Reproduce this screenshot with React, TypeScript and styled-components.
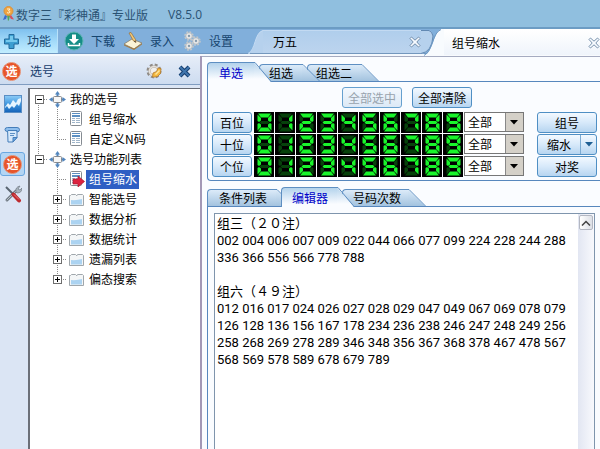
import React, { useState } from 'react';
import styled, { createGlobalStyle, css } from 'styled-components';

const UI_FONT = "'Noto Sans CJK SC', 'Noto Sans', sans-serif";

const GlobalStyle = createGlobalStyle`
  *, *::before, *::after { box-sizing: border-box; }
  body { margin: 0; background: #fafcff; overflow: hidden; }
  button, select, textarea { font: inherit; color: inherit; margin: 0; }
  svg { display: block; flex: none; }
`;

const Window = styled.div`
  display: flex;
  flex-direction: column;
  height: 100vh;
  overflow: hidden;
  font: 12px/16px ${UI_FONT};
  color: #000;
`;

const TitleBar = styled.header`
  display: flex;
  align-items: center;
  flex: none;
  height: 27px;
  padding: 2px 0 0 2px;
  background: #90bfdf;
  color: #2a5273;
`;

const Title = styled.h1`
  margin: 0 20px 0 1px;
  font: inherit;
  white-space: nowrap;
`;

const Version = styled.span`
  font-family: 'Open Sans', sans-serif;
`;

const Toolbar = styled.nav`
  display: flex;
  flex: none;
  height: 29px;
  border-top: 2px solid #6c9cc4;
  background: linear-gradient(#81afdb 0 24px, #6f98c2 24px 25px, #f4f8fd 25px);
`;

const ToolButton = styled.button<{ $active?: boolean }>`
  display: flex;
  align-items: center;
  gap: 7px;
  height: 24px;
  padding: 0 4px;
  border: 0;
  background: none;
  color: #16456f;
  white-space: nowrap;
  ${p => p.$active && css`
    padding: 0 6px 0 3px;
    margin-right: 2px;
    background: linear-gradient(#7fc0ee, #a5dcfa 55%, #c2edff);
    border-right: 1px solid #b9e2fa;
  `}
`;

const DocTabs = styled.div`
  display: flex;
  flex: 1;
  min-width: 0;
  margin-left: 11px;
`;

const DocTab = styled.div<{ $active?: boolean }>`
  display: flex;
  flex: none;
  height: ${p => (p.$active ? 27 : 25)}px;
  padding-top: ${p => (p.$active ? 0 : 1)}px;
  margin-left: ${p => (p.$active ? -10 : 0)}px;
`;

const DocTabBody = styled.div<{ $active?: boolean }>`
  display: flex;
  align-items: center;
  justify-content: space-between;
  width: ${p => (p.$active ? 156 : 158)}px;
  padding-left: ${p => (p.$active ? 8 : 10)}px;
  border-top: 1px solid ${p => (p.$active ? '#ffffff' : '#c3daf2')};
  border-bottom: 1px solid ${p => (p.$active ? '#f8fafd' : '#7397bd')};
  background: ${p => (p.$active ? 'linear-gradient(#ffffff, #eff4fb)' : 'linear-gradient(#b0ceec, #bcd4ee)')};
`;

const PlainButton = styled.button`
  display: flex;
  align-items: center;
  padding: 0;
  border: 0;
  background: none;
`;

const Main = styled.div`
  display: flex;
  flex: 1;
  min-height: 0;
`;

const Side = styled.aside`
  display: flex;
  flex-direction: column;
  flex: none;
  width: 200px;
  background: #dbe5f4;
`;

const SideHeader = styled.div`
  display: flex;
  align-items: center;
  flex: none;
  height: 29px;
  padding: 2px 9px 0 2px;
  border-bottom: 1px solid #7f9cc0;
  background: linear-gradient(#e6edf8, #cddcf0);
  color: #153c6c;
`;

const SideTitle = styled.h2`
  flex: 1;
  margin: 0 0 0 9px;
  font: inherit;
`;

const HeaderTools = styled.div`
  display: flex;
  align-items: center;
  gap: 15px;
`;

const SideBody = styled.div`
  display: flex;
  flex: 1;
  min-height: 0;
  padding-top: 3px;
`;

const Rail = styled.div`
  display: flex;
  flex-direction: column;
  align-items: center;
  flex: none;
  gap: 6px;
  width: 28px;
  padding: 4px 3px 0 0;
`;

const RailButton = styled.button<{ $active?: boolean }>`
  display: grid;
  place-items: center;
  width: 25px;
  height: 24px;
  padding: 0;
  border: 1px solid ${p => (p.$active ? '#6aa7e0' : 'transparent')};
  border-radius: 3px;
  background: ${p => (p.$active ? '#b3d5f4' : 'none')};
`;

const Tree = styled.ul`
  flex: 1;
  margin: 0;
  padding: 0;
  list-style: none;
  background: #fff;
  border-top: 1px solid #676b74;
  border-left: 2px solid #6b6f78;
`;

const TreeRow = styled.li`
  display: flex;
  align-items: center;
  height: 20px;
`;

const dotsDown = 'repeating-linear-gradient(#8a8a8a 0 1px, transparent 1px 2px)';
const dotsAcross = 'repeating-linear-gradient(90deg, #8a8a8a 0 1px, transparent 1px 2px)';

type Link = 'none' | 'line' | 'first' | 'mid' | 'last';

const Branch = styled.span<{ $link: Link }>`
  display: grid;
  place-items: center;
  flex: none;
  width: 18px;
  height: 20px;
  ${p => p.$link !== 'none' && css`
    background-image: ${dotsDown}, ${dotsAcross};
    background-repeat: no-repeat;
    background-size: 1px ${p.$link === 'first' || p.$link === 'last' ? 10 : 20}px, ${p.$link === 'line' ? 0 : 10}px 1px;
    background-position: 8px ${p.$link === 'first' ? 10 : 0}px, 8px 10px;
  `}
  & + & { width: 19px; background-position-x: 9px; }
`;

const Expander = styled.button`
  display: grid;
  place-items: center;
  width: 9px;
  height: 9px;
  padding: 0;
  border: 1px solid #6e6e6e;
  background: #fff;
`;

const NodeIcon = styled.span`
  display: grid;
  place-items: center;
  width: 19px;
  height: 18px;
`;

const NodeLabel = styled.span<{ $selected?: boolean }>`
  height: 19px;
  padding: 1px 2px 0 3px;
  white-space: nowrap;
  ${p => p.$selected && css`background: #2f5fc4; color: #fff;`}
`;

const Splitter = styled.div`
  flex: none;
  width: 2px;
  background: #a398b6;
`;

const Work = styled.main`
  display: flex;
  flex-direction: column;
  flex: 1;
  min-width: 0;
  padding: 5px 0 0 5px;
  border-top: 1px solid #a5abc0;
  background: #fafcff;
`;

const TabStrip = styled.div`
  display: flex;
  align-items: flex-end;
  flex: none;
  height: 19px;
`;

const Tab = styled.button<{ $active?: boolean; $level: number }>`
  display: flex;
  position: relative;
  z-index: ${p => p.$level};
  height: ${p => (p.$active ? 20 : 17)}px;
  margin-bottom: ${p => (p.$active ? -1 : 0)}px;
  padding: 0;
  border: 0;
  background: none;
  color: ${p => (p.$active ? '#0000c8' : '#000')};
  white-space: nowrap;
  & + & { margin-left: -13px; }
`;

const TabBody = styled.span<{ $active?: boolean; $pad: number; $width: number }>`
  display: flex;
  align-items: center;
  width: ${p => p.$width}px;
  padding: 0 0 0 ${p => p.$pad}px;
  border: solid #5e8fc2;
  border-width: 1px 0 0 1px;
  border-radius: 4px 0 0 0;
  background: ${p => (p.$active ? 'linear-gradient(#b4d3ec, #fafcff 85%)' : 'linear-gradient(#dcebf9, #a3c3df)')};
`;

const UpperPane = styled.section`
  display: flex;
  flex-direction: column;
  flex: none;
  height: 100px;
  padding: 5px 3px 0 4px;
  margin-bottom: 6px;
  border: solid #5787bd;
  border-width: 1px 0 1px 1px;
  border-radius: 0 0 0 4px;
`;

const AllButtons = styled.div`
  display: flex;
  gap: 10px;
  margin: 0 0 4px 130px;
`;

const Button = styled.button<{ $width: number }>`
  display: flex;
  align-items: center;
  justify-content: center;
  flex: none;
  width: ${p => p.$width}px;
  height: 21px;
  padding: 0;
  border: 1px solid #4f8fc4;
  border-radius: 3px;
  background: linear-gradient(#f3f9ff, #d7e9fa 50%, #b7d5f0);
  white-space: nowrap;
  &:disabled { color: #98a3ad; border-color: #66a0cf; background: linear-gradient(#f3f8fe, #dce9f6); }
`;

const SplitButton = styled.div`
  display: flex;
  width: 60px;
  height: 21px;
  border: 1px solid #4f8fc4;
  border-radius: 3px;
  background: linear-gradient(#f3f9ff, #d7e9fa 50%, #b7d5f0);
`;

const SplitPart = styled.button<{ $arrow?: boolean }>`
  display: grid;
  place-items: center;
  flex: ${p => (p.$arrow ? '0 0 16px' : '1')};
  padding: 0;
  border: 0;
  border-left: ${p => (p.$arrow ? '1px solid #7dabd2' : '0')};
  background: none;
`;

const PickRows = styled.div`
  display: flex;
  flex-direction: column;
  gap: 1px;
`;

const PickRow = styled.div`
  display: flex;
  justify-content: space-between;
`;

const PickGroup = styled.div`
  display: flex;
  flex: none;
`;

const Digits = styled.div`
  display: flex;
  gap: 1px;
  margin: 0 1px 0 2px;
`;

const DigitButton = styled.button`
  width: 20px;
  height: 21px;
  padding: 0;
  border: 0;
  background: #000;
`;

const SelectBox = styled.div`
  display: grid;
  width: 60px;
  height: 20px;
  border: 1px solid #777;
  background: linear-gradient(90deg, #fff 40px, #888 40px 41px, #d4d0c8 41px);
`;

const Select = styled.select`
  grid-area: 1 / 1;
  appearance: none;
  width: 100%;
  padding: 0 20px 0 3px;
  border: 0;
  background: none;
  line-height: 18px;
`;

const SelectArrow = styled.span`
  grid-area: 1 / 1;
  place-self: center end;
  margin-right: 5px;
  pointer-events: none;
`;

const LowerPane = styled.section`
  display: flex;
  flex: 1;
  min-height: 0;
  padding: 6px 5px 0 6px;
  border: solid #5787bd;
  border-width: 1px 0 0 1px;
`;

const EditorFrame = styled.div`
  display: flex;
  flex: 1;
  border: solid #7f95ad;
  border-width: 1px 1px 0;
  background: #fff;
`;

const Editor = styled.textarea`
  flex: 1;
  min-width: 0;
  padding: 1px 0 0 2px;
  border: 0;
  outline: 0;
  resize: none;
  overflow: hidden;
  background: none;
  white-space: pre;
  font: 13px/17px 'Roboto', 'Noto Sans CJK SC', sans-serif;
`;

const ScrollBar = styled.div`
  flex: none;
  width: 16px;
  padding: 1px;
  background: linear-gradient(90deg, #e2e6f2, #f8f9fd);
`;

const ScrollButton = styled.button`
  display: grid;
  place-items: center;
  width: 14px;
  height: 15px;
  padding: 0;
  border: 1px solid #b3b7c2;
  border-radius: 2px;
  background: linear-gradient(90deg, #fff, #dcdfe6);
`;

const MedalIcon = () => (
  <svg width="13" height="17" viewBox="0 0 13 17">
    <path d="M3 9 1 14l3-1 1-3z" fill="#3b69cc" />
    <path d="M9 9l3 4.500-3-.5L7 10z" fill="#d45060" />
    <path d="M5 9h3l-1 5-1 1z" fill="#53a65b" />
    <circle cx="6.500" cy="5" r="4.500" fill="#f0a440" stroke="#d8903d" />
    <path d="M5 3h3L6.500 4.800q2 .2 1.300 1.600Q6.800 7.500 5 6.700" fill="none" stroke="#fff2d4" />
  </svg>
);

const PlusIcon = () => (
  <svg width="17" height="17" viewBox="0 0 17 17">
    <path d="M6 1.500h5V6h4.500v5H11v4.500H6V11H1.500V6H6z" fill="#3c9ed1" stroke="#236b9d" />
    <path d="M7 3h3v4h4v2H3V7h4z" fill="#75c9ed" />
  </svg>
);

const DownloadIcon = () => (
  <svg width="20" height="20" viewBox="0 0 20 20">
    <circle cx="10" cy="10" r="9" fill="#168d87" stroke="#5eb5b4" />
    <path d="M8 3.500h4V8h3l-5 5-5-5h3z" fill="#fff" />
    <path d="M4.500 12v2.500h11V12" fill="none" stroke="#fff" strokeWidth="1.500" />
  </svg>
);

const WriteIcon = () => (
  <svg width="20" height="18" viewBox="0 0 20 18">
    <path d="M1 12l8-5 10 4-8 6z" fill="#fbf4d8" stroke="#80735b" strokeWidth=".7" />
    <path d="M1 12.500 11 16.500l8-5v1L11 18 1 13.500z" fill="#a57c43" />
    <path d="M6 1l2-.5 4.500 7 .5 3-2.500-1.500z" fill="#efc878" stroke="#936127" strokeWidth=".6" />
    <path d="M12 8.500l1 2-2-1z" fill="#333" />
  </svg>
);

const GearShape = ({ x, y, r }: { x: number; y: number; r: number }) => (
  <g>
    <circle cx={x} cy={y} r={r} fill="none" stroke="#c3c8cc" strokeWidth="2.500" strokeDasharray="1.600 1.150" />
    <circle cx={x} cy={y} r={r - 0.3} fill="#e6e7e7" stroke="#a9aeb2" strokeWidth=".6" />
    <circle cx={x} cy={y} r={r / 3} fill="#8299ad" />
  </g>
);

const GearsIcon = () => (
  <svg width="20" height="20" viewBox="0 0 20 20">
    <GearShape x={7} y={5} r={3.5} />
    <GearShape x={14} y={10} r={3.5} />
    <GearShape x={7} y={15} r={3.5} />
  </svg>
);

const GearIcon = () => (
  <svg width="17" height="17" viewBox="0 0 17 17">
    <circle cx="8" cy="8" r="6" fill="none" stroke="#8f8a85" strokeWidth="3" strokeDasharray="2.700 2.010" />
    <circle cx="8" cy="8" r="4.500" fill="#f1efec" stroke="#b5aea6" strokeWidth="2.500" />
    <circle cx="8" cy="8" r="4.500" fill="none" stroke="#e6e1da" strokeWidth="1.500" />
    <path d="M6.500 14l.5-4 3.500-1.500L12 5l3 .5-.5 5-3 3-2.500.5z" fill="#f5b83e" stroke="#b17a2e" strokeWidth=".8" />
    <path d="M9.500 11.500l4-4" stroke="#ffe69a" strokeWidth="1.500" />
  </svg>
);

const CrossIcon = () => (
  <svg width="13" height="13" viewBox="0 0 13 13">
    <path d="M2 2l9 9M11 2l-9 9" stroke="#173f70" strokeWidth="4" />
    <path d="M2 2l9 9M11 2l-9 9" stroke="#3f75ad" strokeWidth="2" />
  </svg>
);

const TabCloseIcon = () => (
  <svg width="12" height="12" viewBox="0 0 12 12">
    <path d="M2.500 1 6 4.200 9.500 1 11 2.500 7.800 6 11 9.500 9.500 11 6 7.800 2.500 11 1 9.500 4.200 6 1 2.500z" fill="#f8fbff" stroke="#6985a3" strokeWidth=".9" />
  </svg>
);

const PickSealText = styled.span`
  display: grid;
  place-items: center;
  flex: none;
  width: 19px;
  height: 19px;
  border: 1px solid #e88b6b;
  border-radius: 50%;
  background: radial-gradient(#ef6a3a, #e2471f);
  color: #fff;
  font-size: 12px;
  font-weight: 700;
  line-height: 16px;
`;

const ChartIcon = () => (
  <svg width="18" height="18" viewBox="0 0 18 18">
    <defs>
      <linearGradient id="chartFill" x2="0" y2="1">
        <stop stopColor="#8fcdf7" />
        <stop offset=".5" stopColor="#3f97df" />
        <stop offset="1" stopColor="#1462b8" />
      </linearGradient>
    </defs>
    <rect x=".5" y=".5" width="17" height="17" fill="url(#chartFill)" stroke="#5a8ec5" />
    <path d="M1 12l3-4 2 2 3-5 3 3 2-4 3-1v3l-2 5-2-2-3 4-2-2-3 3-2-3-2 2z" fill="#e6f5ff" />
  </svg>
);

const ScrollIcon = () => (
  <svg width="17" height="18" viewBox="0 0 17 18">
    <path d="M3.500 3.500h9.500v9L9 17H4z" fill="#d5e8fb" stroke="#447db9" />
    <path d="M3.500 6.500Q1 6.500 1 4.500t2.500-2H13q2.500 0 2.500 2.200T13 7V5.500H4z" fill="#8fbfee" stroke="#447db9" />
    <path d="M6 8.500h5M6 10.500h4" stroke="#5d90c5" />
    <path d="M9 17v-4.500h4z" fill="#6ea9e3" stroke="#447db9" />
  </svg>
);

const ToolsIcon = () => (
  <svg width="18" height="18" viewBox="0 0 18 18">
    <path d="M3 15 12 6" stroke="#717b85" strokeWidth="3" strokeLinecap="round" />
    <path d="M3 15 12 6" stroke="#b9c1c8" strokeLinecap="round" />
    <path d="M12 7q-1-5 4-6l-2 3 2 1 2-2q0 5-5 5z" fill="#a9b4bd" stroke="#717b85" strokeWidth=".7" />
    <path d="M2 2l7 7" stroke="#596570" strokeWidth="2" />
    <path d="M9.500 9.500l5.500 6" stroke="#bd2a2e" strokeWidth="4" strokeLinecap="round" />
    <path d="M10 9.500l5 5" stroke="#ed797a" />
  </svg>
);

const HubIcon = () => (
  <svg width="17" height="17" viewBox="0 0 17 17">
    <path d="M8.500 0l2.500 3.500H9.500V5h-2V3.500H6zM8.500 17 6 13.500h1.500V12h2v1.500H11zM0 8.500 3.500 6v1.500H5v2H3.500V11zM17 8.500 13.500 11V9.500H12v-2h1.500V6z" fill="#5386bd" />
    <rect x="4.500" y="5.500" width="8" height="6" rx="1" fill="#f7f7f7" stroke="#87898d" />
  </svg>
);

const PageLines = () => (
  <>
    <rect x="2.500" y=".5" width="11" height="14" rx="1" fill="#fff" stroke="#858b92" />
    <path d="M4 2h8v1H4zM4 4h8v2H4z" fill="#5c8fc2" />
    <path d="M4 7.500h3M4 9.500h3M4 11.500h3M8 7.500h4M8 9.500h4M8 11.500h4" stroke="#9fb5ca" />
  </>
);

const PageIcon = () => (
  <svg width="17" height="16" viewBox="0 0 17 16"><PageLines /></svg>
);

const PageArrowIcon = () => (
  <svg width="17" height="16" viewBox="0 0 17 16">
    <PageLines />
    <path d="M5 8h5V5l6.500 5.500L10 16v-3H5z" fill="#dc2440" stroke="#a91832" strokeWidth=".7" />
  </svg>
);

const FolderIcon = () => (
  <svg width="17" height="15" viewBox="0 0 17 15">
    <path d="M1.500 13.500v-10h1l1-1h4l1 1V4l1-1.500h5l1 1v10z" fill="#f4f6f7" stroke="#a0a7ac" />
    <path d="M3 12.500V8q6 .5 11-1v5.500z" fill="#acd3f1" />
  </svg>
);

const Arrow = ({ color }: { color: string }) => (
  <svg width="8" height="5" viewBox="0 0 8 5"><path d="M0 0h8L4 4.500z" fill={color} /></svg>
);

const SEGMENTS = [
  '4,1.500 17,1.500 14,5.500 7,5.500',
  '17.500,2.500 17.500,9 16,10 14,8.500 14,6',
  '16,11 17.500,12 17.500,18.500 14,15 14,12.500',
  '7,15.500 14,15.500 17,19.500 4,19.500',
  '5,11 7,12.500 7,15 3.500,18.500 3.500,12',
  '3.500,2.500 7,6 7,8.500 5,10 3.500,9',
  '7,9 14,9 15.500,10.500 14,12 7,12 5.500,10.500',
];
const LIT = ['012345', '12', '01346', '01236', '1256', '02356', '023456', '012', '0123456', '012356'];

const LedDigit = ({ value }: { value: number }) => (
  <svg width="20" height="21" viewBox="0 0 20 21">
    {SEGMENTS.map((points, i) => (
      <polygon key={i} points={points} fill={LIT[value].includes(String(i)) ? '#19f52b' : '#06420b'} />
    ))}
  </svg>
);

const nodeIcons = { hub: HubIcon, page: PageIcon, current: PageArrowIcon, folder: FolderIcon };

type Node = { text: string; icon: keyof typeof nodeIcons; links: Link[]; box?: '+' | '-' };

const nodes: Node[] = [
  { text: '我的选号', icon: 'hub', links: ['first'], box: '-' },
  { text: '组号缩水', icon: 'page', links: ['line', 'mid'] },
  { text: '自定义N码', icon: 'page', links: ['line', 'last'] },
  { text: '选号功能列表', icon: 'hub', links: ['last'], box: '-' },
  { text: '组号缩水', icon: 'current', links: ['none', 'mid'] },
  { text: '智能选号', icon: 'folder', links: ['none', 'mid'], box: '+' },
  { text: '数据分析', icon: 'folder', links: ['none', 'mid'], box: '+' },
  { text: '数据统计', icon: 'folder', links: ['none', 'mid'], box: '+' },
  { text: '遗漏列表', icon: 'folder', links: ['none', 'mid'], box: '+' },
  { text: '偏态搜索', icon: 'folder', links: ['none', 'last'], box: '+' },
];

const TreeNode = ({ node }: { node: Node }) => {
  const Icon = nodeIcons[node.icon];
  return (
    <TreeRow>
      {node.links.map((link, i) => (
        <Branch key={i} $link={link}>
          {node.box && i === node.links.length - 1 && (
            <Expander aria-label={node.text}>
              <svg width="5" height="5" viewBox="0 0 5 5">
                <path d={node.box === '+' ? 'M0 2.500h5M2.500 0v5' : 'M0 2.500h5'} stroke="#000" />
              </svg>
            </Expander>
          )}
        </Branch>
      ))}
      <NodeIcon><Icon /></NodeIcon>
      <NodeLabel $selected={node.icon === 'current'}>{node.text}</NodeLabel>
    </TreeRow>
  );
};

type TabItem = { text: string; width: number; pad: number };

const PaneTabs = ({ items, start }: { items: TabItem[]; start: number }) => {
  const [current, setCurrent] = useState(start);
  return (
    <TabStrip role="tablist">
      {items.map((item, i) => {
        const active = i === current;
        const h = active ? 20 : 17;
        return (
          <Tab key={item.text} role="tab" aria-selected={active} $active={active} $level={active ? 9 : 5 - i} onClick={() => setCurrent(i)}>
            <TabBody $active={active} $pad={item.pad} $width={item.width}>{item.text}</TabBody>
            <svg width="18" height={h} viewBox={`0 0 18 ${h}`}>
              <defs>
                <linearGradient id={`slant-${active ? 'on' : 'off'}`} gradientUnits="userSpaceOnUse" x1="0" y1="0" x2="0" y2={h}>
                  <stop stopColor={active ? '#b4d3ec' : '#dcebf9'} />
                  <stop offset={active ? 0.85 : 1} stopColor={active ? '#fafcff' : '#a3c3df'} />
                </linearGradient>
              </defs>
              <path d={`M0 .5 17 ${h}H0z`} fill={`url(#slant-${active ? 'on' : 'off'})`} />
              <path d={`M0 .5H1L17.500 ${h}`} fill="none" stroke="#5e8fc2" />
            </svg>
          </Tab>
        );
      })}
    </TabStrip>
  );
};

const tools = [
  { text: '功能', Icon: PlusIcon },
  { text: '下载', Icon: DownloadIcon },
  { text: '录入', Icon: WriteIcon },
  { text: '设置', Icon: GearsIcon },
];

const editorText = `组三（２０注）
002 004 006 007 009 022 044 066 077 099 224 228 244 288
336 366 556 566 778 788

组六（４９注）
012 016 017 024 026 027 028 029 047 049 067 069 078 079
126 128 136 156 167 178 234 236 238 246 247 248 249 256
258 268 269 278 289 346 348 356 367 368 378 467 478 567
568 569 578 589 678 679 789`;

const RowAction = ({ text }: { text: string }) =>
  text === '缩水' ? (
    <SplitButton>
      <SplitPart>{text}</SplitPart>
      <SplitPart $arrow aria-label="缩水选项"><Arrow color="#1f5f94" /></SplitPart>
    </SplitButton>
  ) : (
    <Button $width={60}>{text}</Button>
  );

export default function App() {
  return (
    <Window>
      <GlobalStyle />
      <TitleBar>
        <MedalIcon />
        <Title>数字三『彩神通』专业版</Title>
        <Version>V8.5.0</Version>
      </TitleBar>
      <Toolbar>
        {tools.map(({ text, Icon }, i) => (
          <ToolButton key={text} $active={i === 0}><Icon />{text}</ToolButton>
        ))}
        <DocTabs>
          <DocTab>
            <svg width="15" height="24" viewBox="0 0 15 24">
              <path d="M0 24C8 20 6 3 15 0v24z" fill="#b6d1ed" />
              <path d="M0 23.500C8 20 6 3 15 .5" fill="none" stroke="#c3daf2" />
              <path d="M2 23.500h13" stroke="#7397bd" />
            </svg>
            <DocTabBody>
              万五
              <PlainButton aria-label="关闭 万五"><TabCloseIcon /></PlainButton>
            </DocTabBody>
            <svg width="13" height="24" viewBox="0 0 13 24">
              <path d="M0 0h8q3 1 4 6Q11 22 0 24z" fill="#b6d1ed" />
              <path d="M0 .5h8q3 1 4 5.500Q11 22 0 23.500" fill="none" stroke="#6289b3" />
            </svg>
          </DocTab>
          <DocTab $active>
            <svg width="20" height="27" viewBox="0 0 20 27">
              <path d="M0 27C10 22 9 4 17 0h3v27z" fill="#f8fbfe" />
              <path d="M0 26.500C9 22 8 4 17 .5" fill="none" stroke="#6f98c2" />
            </svg>
            <DocTabBody $active>
              组号缩水
              <PlainButton aria-label="关闭 组号缩水"><TabCloseIcon /></PlainButton>
            </DocTabBody>
          </DocTab>
        </DocTabs>
      </Toolbar>
      <Main>
        <Side>
          <SideHeader>
            <PickSealText aria-hidden="true">选</PickSealText>
            <SideTitle>选号</SideTitle>
            <HeaderTools>
              <PlainButton aria-label="选项"><GearIcon /></PlainButton>
              <PlainButton aria-label="关闭"><CrossIcon /></PlainButton>
            </HeaderTools>
          </SideHeader>
          <SideBody>
            <Rail>
              <RailButton aria-label="走势"><ChartIcon /></RailButton>
              <RailButton aria-label="记录"><ScrollIcon /></RailButton>
              <RailButton $active><PickSealText>选</PickSealText></RailButton>
              <RailButton aria-label="工具"><ToolsIcon /></RailButton>
            </Rail>
            <Tree>
              {nodes.map((node, i) => <TreeNode key={i} node={node} />)}
            </Tree>
          </SideBody>
        </Side>
        <Splitter />
        <Work>
          <PaneTabs start={0} items={[
            { text: '单选', width: 47, pad: 11 },
            { text: '组选', width: 43, pad: 9 },
            { text: '组选二', width: 54, pad: 8 },
          ]} />
          <UpperPane>
            <AllButtons>
              <Button $width={60} disabled>全部选中</Button>
              <Button $width={60}>全部清除</Button>
            </AllButtons>
            <PickRows>
              {[['百位', '组号'], ['十位', '缩水'], ['个位', '对奖']].map(([place, action]) => (
                <PickRow key={place}>
                  <PickGroup>
                    <Button $width={40}>{place}</Button>
                    <Digits>
                      {LIT.map((_, n) => (
                        <DigitButton key={n} aria-label={`${place} ${n}`}><LedDigit value={n} /></DigitButton>
                      ))}
                    </Digits>
                    <SelectBox>
                      <Select aria-label={place}><option>全部</option></Select>
                      <SelectArrow><Arrow color="#000" /></SelectArrow>
                    </SelectBox>
                  </PickGroup>
                  <RowAction text={action} />
                </PickRow>
              ))}
            </PickRows>
          </UpperPane>
          <PaneTabs start={1} items={[
            { text: '条件列表', width: 69, pad: 11 },
            { text: '编辑器', width: 56, pad: 10 },
            { text: '号码次数', width: 66, pad: 10 },
          ]} />
          <LowerPane>
            <EditorFrame>
              <Editor aria-label="编辑器" defaultValue={editorText} spellCheck={false} />
              <ScrollBar>
                <ScrollButton aria-label="向上滚动">
                  <svg width="10" height="6" viewBox="0 0 10 6">
                    <path d="M1 5.500l4-4 4 4" fill="none" stroke="#444" strokeWidth="1.500" />
                  </svg>
                </ScrollButton>
              </ScrollBar>
            </EditorFrame>
          </LowerPane>
        </Work>
      </Main>
    </Window>
  );
}
